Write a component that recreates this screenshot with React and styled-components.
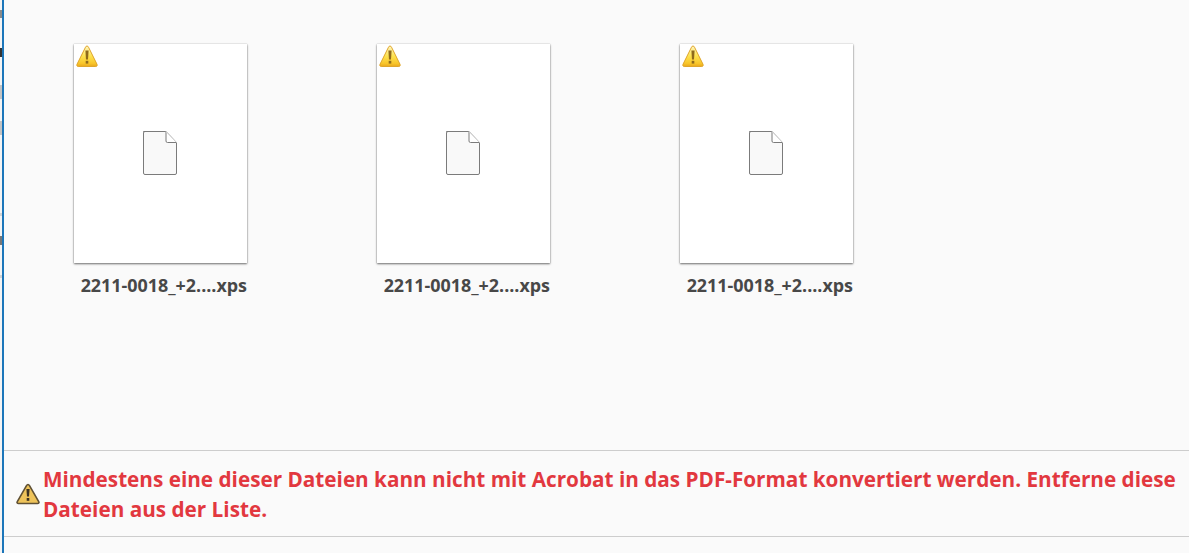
import styled, { createGlobalStyle } from "styled-components";

const GlobalStyle = createGlobalStyle`
  html, body {
    margin: 0;
    padding: 0;
    background: #fafafa;
    overflow: hidden;
  }
`;

const Page = styled.div`
  display: flex;
  width: 1189px;
  height: 553px;
  font-family: "Open Sans", "Noto Sans", sans-serif;
  background: #fafafa;
`;

const Strip = styled.div`
  width: 2px;
  flex: none;
  background: #f4f4f4;
  display: flex;
  flex-direction: column;
  align-items: flex-start;
`;

const Tick = styled.div`
  width: 2px;
  height: ${(p) => p.$h}px;
  margin-top: ${(p) => p.$top}px;
  background: ${(p) => p.$color || "#555"};
`;

const Main = styled.div`
  flex: 1;
  min-width: 0;
  display: flex;
  flex-direction: column;
  border-left: 2px solid #1c76ba;
`;

const FileArea = styled.div`
  height: 450px;
  box-sizing: border-box;
  padding: 44px 0 0 70px;
  display: flex;
  align-items: flex-start;
  gap: 130px;
`;

const FileItem = styled.div`
  width: 173px;
  display: flex;
  flex-direction: column;
  align-items: flex-end;
`;

const Thumb = styled.div`
  position: relative;
  width: 173px;
  height: 219px;
  background: #fff;
  box-shadow: 0 1px 2px rgba(0, 0, 0, 0.55), 0 0 1px rgba(0, 0, 0, 0.25);
  display: flex;
  align-items: center;
  justify-content: center;
`;

const GlyphWrap = styled.div`
  display: flex;
  margin: 0 2px 2px 0;
`;

const BadgeIcon = styled.svg`
  position: absolute;
  left: 2px;
  top: 1px;
`;

const FileLabel = styled.div`
  margin-top: 11px;
  font-size: 17.9px;
  line-height: 22px;
  font-weight: 700;
  color: #484848;
  white-space: nowrap;
`;

const Notice = styled.div`
  height: 85px;
  display: flex;
  align-items: center;
  gap: 3px;
  padding: 0 8px 0 12px;
  border-top: 1px solid #cdcdcd;
  border-bottom: 1px solid #cdcdcd;
`;

const NoticeIcon = styled.svg`
  flex: none;
  margin-top: 1px;
`;

const NoticeText = styled.div`
  font-size: 20.72px;
  line-height: 30px;
  font-weight: 700;
  color: #e2383f;
`;

const FileGlyph = () => (
  <svg width="36" height="46" viewBox="0 0 36 46">
    <path d="M1.5 1.5H24L34.5 12.5V43a1.5 1.5 0 0 1-1.5 1.5H3A1.5 1.5 0 0 1 1.5 43V3A1.5 1.5 0 0 1 3 1.5Z" fill="#f9f9f9" stroke="#7b7b7b" />
    <path d="M24 1.5V11a1.5 1.5 0 0 0 1.5 1.5H34.5" fill="#fff" stroke="#7b7b7b" />
    <path d="M24 1.5L34.5 12.5" fill="none" stroke="#d4d4d4" />
  </svg>
);

const YellowWarning = () => (
  <BadgeIcon width="22" height="23" viewBox="0 0 22 23">
    <defs>
      <linearGradient id="warnFill" x1="0" y1="0" x2="0" y2="1">
        <stop offset="0" stopColor="#fff6c0" />
        <stop offset="0.5" stopColor="#fde24f" />
        <stop offset="0.85" stopColor="#f8c52a" />
        <stop offset="1" stopColor="#e9a81c" />
      </linearGradient>
    </defs>
    <path d="M11 1C11.7 1 12.2 1.5 12.5 2.2L21 19.3C21.6 20.5 21 21.5 19.8 21.5H2.2C1 21.5 .4 20.5 1 19.3L9.5 2.2C9.8 1.5 10.3 1 11 1Z" fill="url(#warnFill)" stroke="#dfa52c" />
    <path d="M9.4 5.5H12.6L12 14.5H10Z" fill="#8f6a1c" />
    <rect x="9.7" y="15.8" width="2.6" height="2.8" fill="#8f6a1c" />
  </BadgeIcon>
);

const FooterWarning = () => (
  <NoticeIcon width="24" height="22" viewBox="0 0 24 22">
    <path d="M12 1.5C12.7 1.5 13.1 1.9 13.5 2.6L22.7 18.6C23.3 19.7 22.8 20.5 21.6 20.5H2.4C1.2 20.5 .7 19.7 1.3 18.6L10.5 2.6C10.9 1.9 11.3 1.5 12 1.5Z" fill="#eec35a" stroke="#5f5034" strokeWidth="1.6" />
    <path d="M10.4 6H13.6L13 13.5H11Z" fill="#3e3322" />
    <rect x="10.7" y="15" width="2.6" height="2.8" fill="#3e3322" />
  </NoticeIcon>
);

const files = ["a", "b", "c"];

const ticks = [
  { top: 10, h: 8, color: "#8a8a8a" },
  { top: 30, h: 9, color: "#333" },
  { top: 28, h: 14, color: "#c4c4c4" },
  { top: 22, h: 14, color: "#c4c4c4" },
  { top: 78, h: 3, color: "#d4d4d4" },
  { top: 20, h: 9, color: "#777" },
  { top: 30, h: 3, color: "#d4d4d4" },
];

const App = () => {
  return (
    <>
      <GlobalStyle />
      <Page>
        <Strip>
          {ticks.map((t, i) => (
            <Tick key={i} $top={t.top} $h={t.h} $color={t.color} />
          ))}
        </Strip>
        <Main>
          <FileArea>
            {files.map((id) => (
              <FileItem key={id}>
                <Thumb>
                  <YellowWarning />
                  <GlyphWrap>
                    <FileGlyph />
                  </GlyphWrap>
                </Thumb>
                <FileLabel>2211-0018_+2....xps</FileLabel>
              </FileItem>
            ))}
          </FileArea>
          <Notice>
            <FooterWarning />
            <NoticeText>
              Mindestens eine dieser Dateien kann nicht mit Acrobat in das PDF-Format konvertiert werden. Entferne diese Dateien aus der Liste.
            </NoticeText>
          </Notice>
        </Main>
      </Page>
    </>
  );
};

export default App;
